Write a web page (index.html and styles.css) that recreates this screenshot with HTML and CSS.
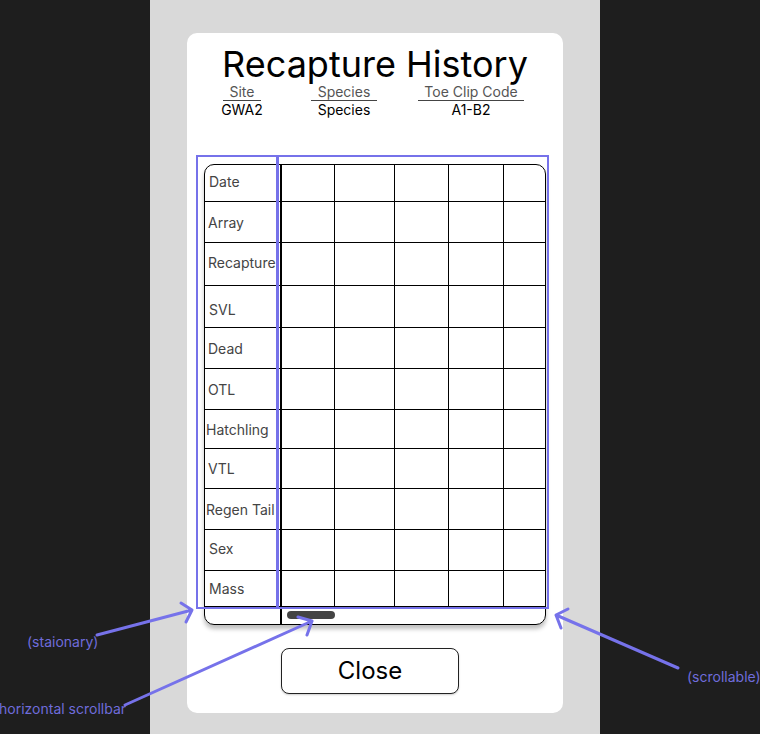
FILE: index.html
```html
<!DOCTYPE html>
<html lang="en">
<head>
  <meta charset="UTF-8">
  <title>Recapture History</title>
  <link rel="stylesheet" href="styles.css">
</head>
<body>
  <div class="stage">
    <div class="panel">
      <div class="card">
        <h1 class="title">Recapture History</h1>

        <div class="meta">
          <div class="meta-item site">
            <div class="meta-label">Site</div>
            <div class="meta-value">GWA2</div>
          </div>
          <div class="meta-item species">
            <div class="meta-label">Species</div>
            <div class="meta-value">Species</div>
          </div>
          <div class="meta-item toe">
            <div class="meta-label">Toe Clip Code</div>
            <div class="meta-value">A1-B2</div>
          </div>
        </div>

        <div class="history">
          <div class="fixed-col">
            <div class="cell label in up">Date</div>
            <div class="cell label">Array</div>
            <div class="cell label up">Recapture</div>
            <div class="cell label in down">SVL</div>
            <div class="cell label">Dead</div>
            <div class="cell label">OTL</div>
            <div class="cell label wide">Hatchling</div>
            <div class="cell label">VTL</div>
            <div class="cell label wide">Regen Tail</div>
            <div class="cell label in up">Sex</div>
            <div class="cell label in">Mass</div>
            <div class="cell foot"></div>
          </div>
          <div class="scroll-col">
            <div class="grid" id="grid"></div>
          </div>
        </div>

        <button class="close-btn">Close</button>
      </div>
    </div>

    <div class="zone zone-fixed"></div>
    <div class="zone zone-scroll"></div>

    <svg class="arrows" width="760" height="734" viewBox="0 0 760 734">
      <path d="M97 635 L192 610 M181 603 L192 610 L186 622" />
      <path d="M125 705 L312 621 M298 617 L312 621 L307 635" />
      <path d="M678 668 L556 615 M568 609 L556 615 L561 628" />
    </svg>

    <span class="note note-fixed">(staionary)</span>
    <span class="note note-bar">horizontal scrollbar</span>
    <span class="note note-scroll">(scrollable)</span>
  </div>

  <script>
    // 11 data rows x 5 visible columns, then the scrollbar row
    const grid = document.getElementById("grid");
    for (let r = 0; r < 11; r++) {
      for (let c = 0; c < 5; c++) {
        const cell = document.createElement("div");
        cell.className = "cell";
        grid.appendChild(cell);
      }
    }
    const foot = document.createElement("div");
    foot.className = "cell foot bar-row";
    foot.innerHTML = '<div class="thumb"></div>';
    grid.appendChild(foot);
  </script>
</body>
</html>
```

FILE: styles.css
```css
body {
  margin: 0;
  background: #1e1e1e;
  font-family: Inter, "Noto Sans", sans-serif;
}

.stage {
  position: relative;
  width: 760px;
  height: 734px;
  overflow: hidden;
}

.panel {
  width: 450px;
  height: 734px;
  margin-left: 150px;
  background: #d9d9d9;
  padding-top: 33px;
  box-sizing: border-box;
}

.card {
  width: 376px;
  height: 680px;
  margin-left: 37px;
  background: #ffffff;
  border-radius: 10px;
  padding-top: 13px;
  box-sizing: border-box;
}

.title {
  margin: 0;
  font-size: 36px;
  font-weight: 400;
  line-height: 36px;
  text-align: center;
  color: #000;
}

.meta {
  display: flex;
  padding-left: 36px;
  margin-top: 2px;
}

.meta-item {
  display: flex;
  flex-direction: column;
  align-items: center;
}

.site { width: 38px; }
.species { width: 66px; margin-left: 50px; }
.toe { width: 106px; margin-left: 41px; }

.meta-label {
  align-self: stretch;
  font-size: 14px;
  line-height: 16px;
  text-align: center;
  color: #555;
  border-bottom: 1px solid #444;
}

.meta-value {
  font-size: 14px;
  line-height: 17px;
  color: #000;
  white-space: nowrap;
}

/* the table: fixed label column + scrolling data */
.history {
  display: flex;
  width: 342px;
  height: 461px;
  margin: 46px 0 0 17px;
  border: 1px solid #000;
  border-radius: 10px;
  box-sizing: border-box;
  overflow: hidden;
  box-shadow: 0 4px 4px rgba(0, 0, 0, 0.25);
}

.fixed-col,
.grid {
  display: grid;
  grid-template-rows: 37px 41px 43px 42px 41px 41px 39px 40px 41px 41px 36px 17px;
}

.fixed-col {
  width: 77px;
  flex-shrink: 0;
  border-right: 2px solid #000;
  box-sizing: border-box;
}

.scroll-col {
  flex: 1;
  overflow: hidden;
}

.grid {
  width: max-content;
  grid-template-columns: 53px 60px 54px 55px 60px;
}

.cell {
  border-bottom: 1px solid #000;
  box-sizing: border-box;
}

.grid .cell {
  border-right: 1px solid #000;
}

.grid .foot {
  border-right: none;
}

.cell.foot {
  border-bottom: none;
}

.bar-row {
  grid-column: 1 / -1;
  padding: 4px 0 0 5px;
}

.thumb {
  width: 48px;
  height: 8px;
  border-radius: 4px;
  background: #444;
}

.label {
  display: flex;
  align-items: center;
  padding-left: 3px;
  font-size: 14px;
  color: #444;
  white-space: nowrap;
}

.label.in { padding-left: 4px; }
.label.wide { padding-left: 1px; }
.label.up { padding-bottom: 4px; }
.label.down { padding-top: 5px; }

.close-btn {
  display: block;
  width: 178px;
  height: 46px;
  margin: 23px 0 0 94px;
  padding: 0 0 2px;
  background: #fff;
  border: 1px solid #222;
  border-radius: 8px;
  font-family: Inter, "Noto Sans", sans-serif;
  font-size: 24px;
  color: #000;
  box-shadow: 0 1px 2px rgba(0, 0, 0, 0.2);
}

/* annotation layer */
.zone {
  position: absolute;
  border: 2px solid #7672ea;
  box-sizing: border-box;
}

.zone-fixed {
  left: 196px;
  top: 155px;
  width: 83px;
  height: 454px;
}

.zone-scroll {
  left: 276px;
  top: 155px;
  width: 273px;
  height: 454px;
}

.arrows {
  position: absolute;
  left: 0;
  top: 0;
  fill: none;
  stroke: #7672ea;
  stroke-width: 3;
  stroke-linecap: round;
  stroke-linejoin: round;
}

.note {
  position: absolute;
  font-size: 14px;
  line-height: 16px;
  color: #6f6cdb;
  white-space: nowrap;
}

.note-fixed { left: 27px; top: 634px; }
.note-bar { left: -1px; top: 701px; }
.note-scroll { left: 687px; top: 669px; }
```
